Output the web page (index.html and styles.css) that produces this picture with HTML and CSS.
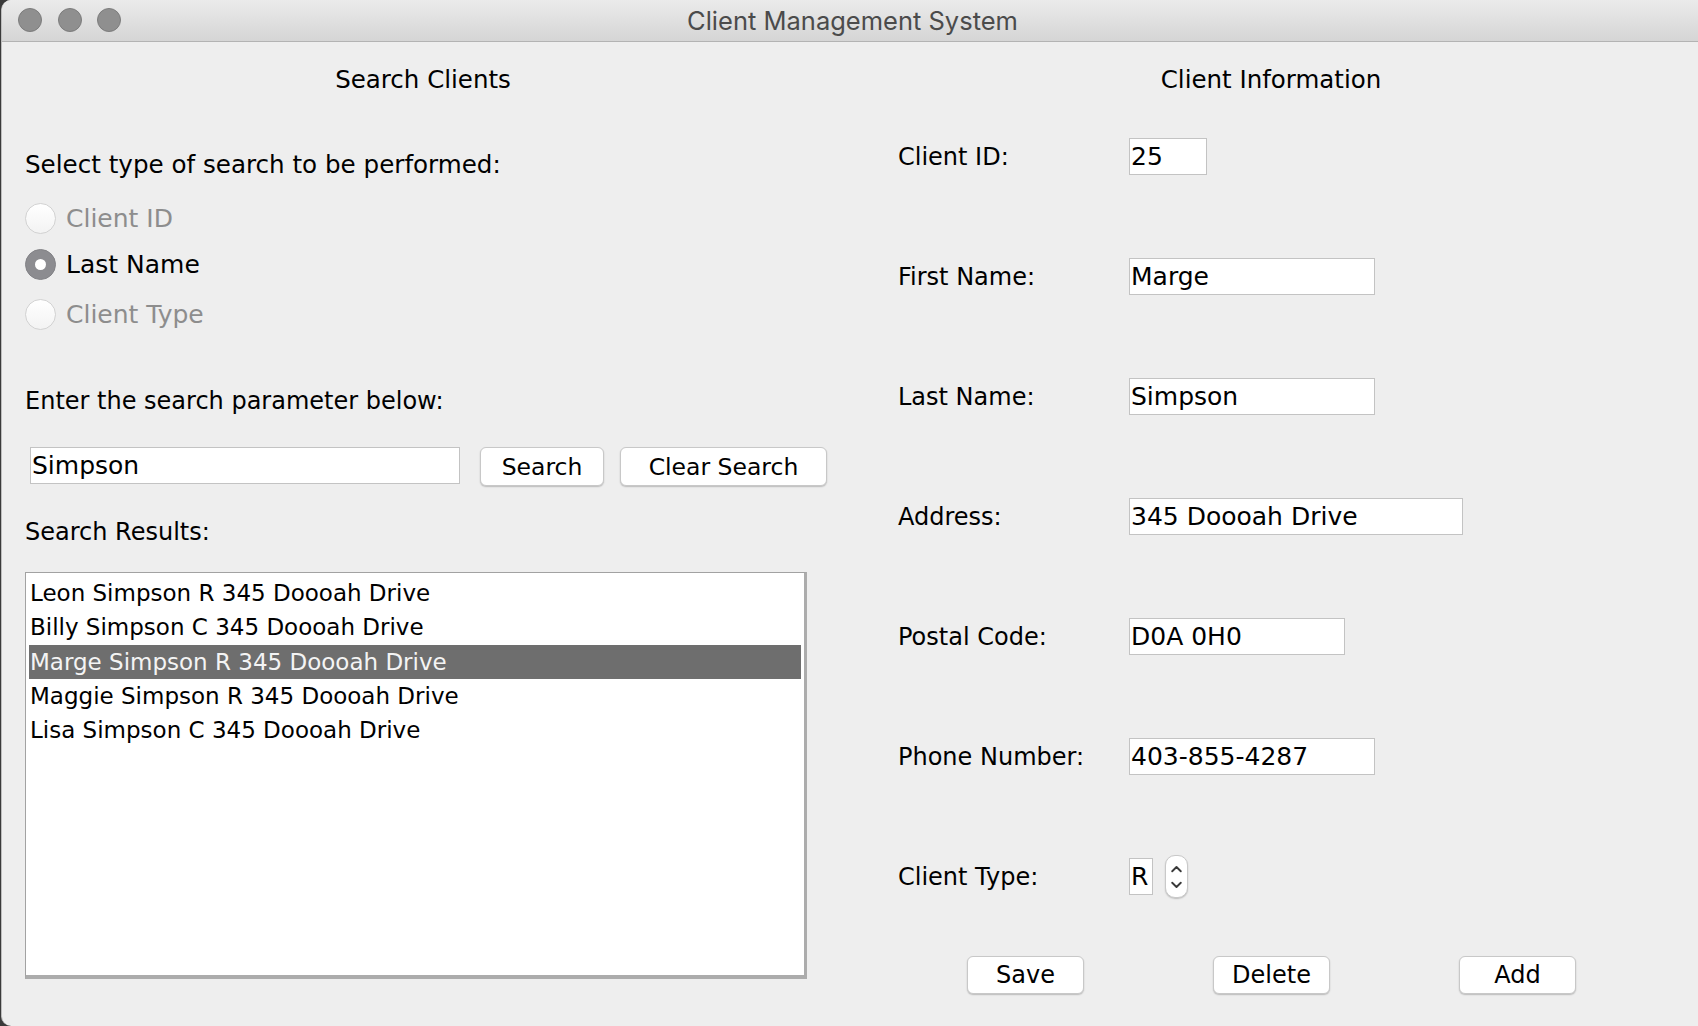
FILE: index.html
```html
<!DOCTYPE html>
<html lang="en">
<head>
<meta charset="utf-8">
<title>Client Management System</title>
<link rel="stylesheet" href="styles.css">
</head>
<body>
<div class="window">
  <header class="titlebar">
    <div class="lights">
      <span class="light"></span>
      <span class="light"></span>
      <span class="light"></span>
    </div>
    <div class="title">Client Management System</div>
  </header>
  <main class="content">
    <section class="left">
      <h2 class="panel-title">Search Clients</h2>
      <p class="label select-label">Select type of search to be performed:</p>
      <div class="radios">
        <div class="radio disabled"><span class="dot"></span><span>Client ID</span></div>
        <div class="radio checked"><span class="dot"></span><span>Last Name</span></div>
        <div class="radio disabled"><span class="dot"></span><span>Client Type</span></div>
      </div>
      <p class="label enter-label">Enter the search parameter below:</p>
      <div class="search-row">
        <div class="field search-field">Simpson</div>
        <button class="btn btn-search">Search</button>
        <button class="btn btn-clear">Clear Search</button>
      </div>
      <p class="label results-label">Search Results:</p>
      <div class="list">
        <div class="item">Leon Simpson R 345 Doooah Drive</div>
        <div class="item">Billy Simpson C 345 Doooah Drive</div>
        <div class="item selected">Marge Simpson R 345 Doooah Drive</div>
        <div class="item">Maggie Simpson R 345 Doooah Drive</div>
        <div class="item">Lisa Simpson C 345 Doooah Drive</div>
      </div>
    </section>
    <section class="right">
      <h2 class="panel-title">Client Information</h2>
      <div class="form">
        <div class="form-row"><span class="flabel">Client ID:</span><div class="field w-id">25</div></div>
        <div class="form-row"><span class="flabel">First Name:</span><div class="field w-name">Marge</div></div>
        <div class="form-row"><span class="flabel">Last Name:</span><div class="field w-name">Simpson</div></div>
        <div class="form-row"><span class="flabel">Address:</span><div class="field w-addr">345 Doooah Drive</div></div>
        <div class="form-row"><span class="flabel">Postal Code:</span><div class="field w-postal">D0A 0H0</div></div>
        <div class="form-row"><span class="flabel">Phone Number:</span><div class="field w-name">403-855-4287</div></div>
        <div class="form-row"><span class="flabel">Client Type:</span><div class="field w-type">R</div>
          <div class="spinner">
            <svg width="22" height="42" viewBox="0 0 22 42">
              <path d="M6.5 15 L11 10.5 L15.5 15" fill="none" stroke="#3a3a3a" stroke-width="2" stroke-linecap="round" stroke-linejoin="round"/>
              <path d="M6.5 27 L11 31.5 L15.5 27" fill="none" stroke="#3a3a3a" stroke-width="2" stroke-linecap="round" stroke-linejoin="round"/>
            </svg>
          </div>
        </div>
      </div>
      <div class="actions">
        <button class="btn btn-action">Save</button>
        <button class="btn btn-action">Delete</button>
        <button class="btn btn-action">Add</button>
      </div>
    </section>
  </main>
</div>
</body>
</html>
```
FILE: styles.css
```css
* { box-sizing: border-box; }
html, body {
  margin: 0;
  padding: 0;
  width: 1698px;
  height: 1026px;
  overflow: hidden;
  background: #3a3a3a;
}
.window {
  width: 1698px;
  height: 1026px;
  margin-left: 1px;
  background: #eeeeee;
  border-left: 1px solid #bdbdbd;
  border-radius: 10px 0 0 10px;
  overflow: hidden;
  font-family: "DejaVu Sans", sans-serif;
  color: #000;
}
.titlebar {
  position: relative;
  height: 42px;
  background: linear-gradient(#ebebeb, #d5d5d5);
  border-bottom: 1px solid #b3b3b3;
}
.lights {
  position: absolute;
  left: 16px;
  top: 8px;
  display: flex;
  gap: 15.5px;
}
.light {
  width: 24px;
  height: 24px;
  border-radius: 50%;
  background: #8f8f8f;
  border: 1px solid #7c7c7c;
}
.title {
  text-align: center;
  font-family: "Inter", "Liberation Sans", sans-serif;
  font-size: 25.5px;
  line-height: 41px;
  color: #4b4b4b;
  padding-left: 4px;
}
.content {
  display: grid;
  grid-template-columns: 841px 1fr;
  padding-top: 23px;
}
.panel-title {
  margin: 0;
  font-weight: normal;
  font-size: 24.5px;
  line-height: 30px;
  text-align: center;
}
.left .panel-title { margin-right: 22px; }
.left {
  padding-left: 23px;
  display: flex;
  flex-direction: column;
}
.label {
  margin: 0;
  font-size: 24px;
  line-height: 30px;
}
.select-label { margin-top: 55px; font-size: 24.6px; }
.radios {
  margin-top: 22px;
  display: flex;
  flex-direction: column;
}
.radio {
  display: flex;
  align-items: center;
  gap: 10px;
  height: 32px;
  font-size: 25px;
}
.radio + .radio { margin-top: 14px; }
.radio + .radio + .radio { margin-top: 18px; }
.radio.disabled { color: #8d8d8d; }
.dot {
  width: 31px;
  height: 31px;
  border-radius: 50%;
  border: 1px solid #d2d2d2;
  background: linear-gradient(#ffffff, #f3f3f3);
  display: flex;
  align-items: center;
  justify-content: center;
  flex: none;
}
.radio.checked .dot {
  background: #8c8c90;
  border-color: #838387;
}
.radio.checked .dot::after {
  content: "";
  width: 11px;
  height: 11px;
  border-radius: 50%;
  background: #fff;
}
.enter-label { margin-top: 56px; }
.search-row {
  margin-top: 31px;
  padding-left: 5px;
  display: flex;
  align-items: flex-start;
}
.field {
  background: #fff;
  border: 1px solid #c3c3c3;
  height: 37px;
  font-size: 25px;
  line-height: 35px;
  padding-left: 1px;
  white-space: nowrap;
  overflow: hidden;
}
.search-field { width: 430px; }
.btn {
  font-family: "DejaVu Sans", sans-serif;
  font-size: 23.5px;
  height: 39px;
  background: #fff;
  border: 1px solid #c8c8c8;
  border-radius: 6px;
  box-shadow: 0 1px 1.5px rgba(0,0,0,0.22);
  color: #000;
  padding: 0;
}
.btn-search { width: 124px; margin-left: 20px; }
.btn-clear { width: 207px; margin-left: 16px; }
.results-label { margin-top: 31px; }
.list {
  margin-top: 25px;
  width: 782px;
  height: 407px;
  background: #fff;
  border-left: 1px solid #a2a2a2;
  border-top: 1px solid #a2a2a2;
  border-right: 3px solid #acacac;
  border-bottom: 4px solid #acacac;
  padding: 3px 3px 0 3px;
}
.item {
  height: 34.25px;
  line-height: 34px;
  font-size: 23px;
  padding-left: 1px;
  white-space: nowrap;
}
.item.selected {
  background: #6e6e6e;
  color: #f4f4f4;
}
.right {
  display: flex;
  flex-direction: column;
}
.form {
  margin-top: 43px;
  padding-left: 55px;
  display: flex;
  flex-direction: column;
  gap: 83px;
}
.form-row {
  display: flex;
  align-items: center;
  height: 37px;
}
.flabel {
  width: 231px;
  font-size: 24px;
  flex: none;
}
.w-id { width: 78px; }
.w-name { width: 246px; }
.w-addr { width: 334px; }
.w-postal { width: 216px; }
.w-type { width: 24px; padding-left: 1px; }
.spinner {
  margin-left: 12px;
  width: 23px;
  height: 43px;
  border: 1px solid #c9c9c9;
  border-radius: 10px;
  background: #fff;
  box-shadow: 0 1px 1.5px rgba(0,0,0,0.2);
  display: flex;
  align-items: center;
  justify-content: center;
}
.actions {
  margin-top: 61px;
  padding-left: 124px;
  display: flex;
  gap: 129px;
}
.btn-action { width: 117px; height: 38px; font-size: 24px; }
```
